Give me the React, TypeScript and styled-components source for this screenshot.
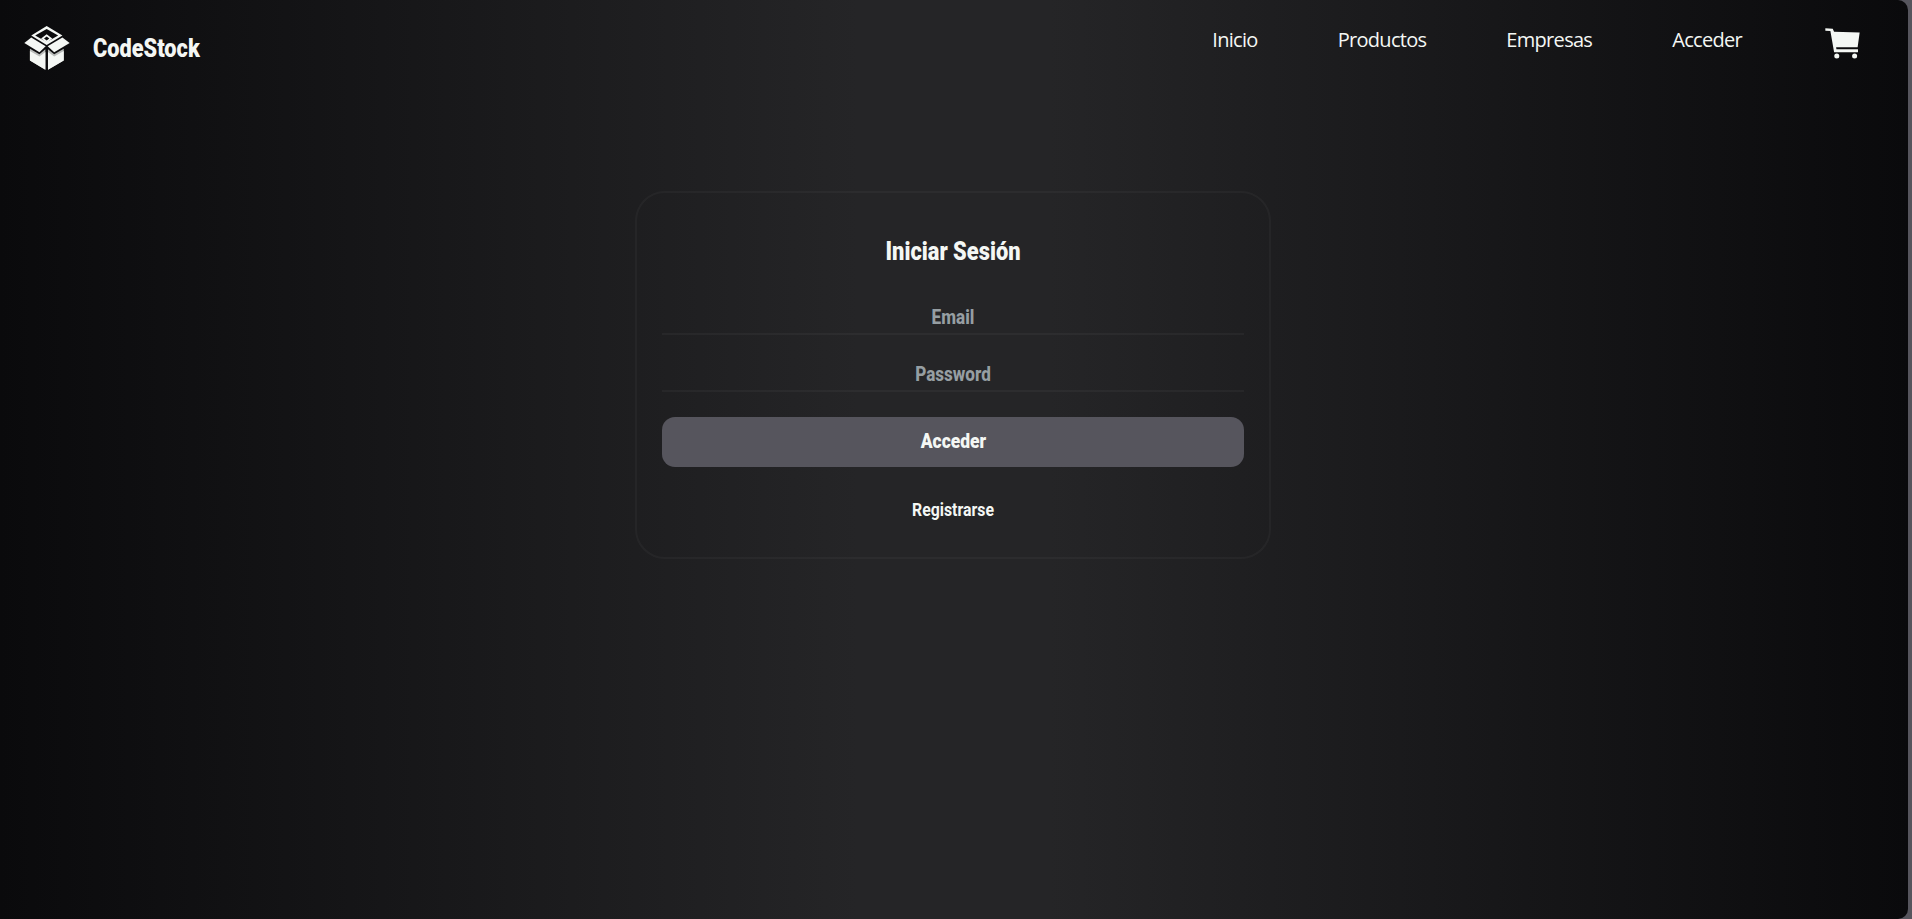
import React from "react";
import styled, { createGlobalStyle } from "styled-components";

const Global = createGlobalStyle`
  html, body { margin: 0; padding: 0; height: 100%; background: #56555d; overflow: hidden; }
  #root { height: 100%; }
  * { box-sizing: border-box; }
`;

const condensed = `"Roboto", "Liberation Sans", sans-serif`;

const Page = styled.div`
  width: 1908px;
  height: 919px;
  border-radius: 0 10px 10px 0;
  background: linear-gradient(90deg, #0a0a0c 0%, #252527 45%, #252527 55%, #0a0a0c 100%);
  display: flex;
  flex-direction: column;
  overflow: hidden;
`;
const Nav = styled.header`
  height: 96px;
  flex: none;
  display: flex;
  align-items: flex-start;
  justify-content: space-between;
  padding: 26px 48px 0 24px;
`;
const Brand = styled.a`
  display: flex;
  align-items: center;
  gap: 23px;
  color: #f4f7f4;
  font: 900 25px ${condensed};
`;
const BrandName = styled.span`
  display: inline-block;
  transform: scaleX(0.87);
  transform-origin: left center;
`;
const Links = styled.nav`
  display: flex;
  align-items: flex-start;
  gap: 80px;
  padding-top: 2px;
`;
const NavLink = styled.a`
  color: #f4f7f4;
  font: 400 20px/24px "Open Sans", "Lato", sans-serif;
  letter-spacing: -0.7px;
`;
const CartLink = styled.a`
  display: flex;
  margin-left: 3px;
`;
const Main = styled.main`
  flex: 1;
  display: flex;
  flex-direction: column;
  align-items: center;
  padding: 95px 2px 0 0;
`;
const Card = styled.form`
  width: 636px;
  height: 368px;
  padding: 0 25px;
  border: 2px solid rgba(255, 255, 255, 0.035);
  border-radius: 30px;
  display: flex;
  flex-direction: column;
`;
const Title = styled.h1`
  margin: 43px 0 0;
  text-align: center;
  color: #f4f7f4;
  font: 900 26px/30px ${condensed};
  transform: scaleX(0.84);
`;
const FieldRow = styled.div`
  height: 57px;
  padding-top: 25px;
  border-bottom: 2px solid rgba(255, 255, 255, 0.04);
`;
const Field = styled.input`
  display: block;
  width: 100%;
  height: 28px;
  padding: 0;
  background: transparent;
  border: 0;
  outline: none;
  text-align: center;
  color: #f4f7f4;
  font: 800 21px ${condensed};
  transform: scaleX(0.815);
  &::placeholder { color: #969ea2; opacity: 1; }
`;
const Fields = styled.div`
  margin-top: 12px;
`;
const Submit = styled.button`
  margin-top: 25px;
  height: 50px;
  width: 100%;
  padding: 0 0 2px;
  border: 0;
  border-radius: 13px;
  background: #56555d;
  color: #f4f7f4;
  font: 900 21px ${condensed};
`;
const SubmitLabel = styled.span`
  display: inline-block;
  transform: scaleX(0.83);
`;
const Register = styled.a`
  margin-top: 31px;
  text-align: center;
  color: #f4f7f4;
  font: 700 18px/24px ${condensed};
  transform: scaleX(0.88);
`;

const Logo = () => (
  <svg width="46" height="44" viewBox="28 33 140 134" fill="#f4f7f4">
    <path fillRule="evenodd" d="M97 33 L145 62 L97 91 L50 62 Z M97 42 L62 62 L97 82 L132 62 Z" />
    <path fillRule="evenodd" d="M97 58 L114 71 L97 84 L80 71 Z M97 65 L89 71 L97 77 L105 71 Z" />
    <path d="M50 68 L94 95 L75 113 L29 85 Z" />
    <path d="M145 68 L100 95 L120 113 L167 85 Z" />
    <path d="M46 102 L75 119 L93 104 L93 166 L46 138 Z" fill="#b9bcba" />
    <path d="M46 109 L75 126 L93 112 L93 166 L46 138 Z" />
    <path d="M149 102 L120 119 L101 104 L101 166 L149 138 Z" fill="#b9bcba" />
    <path d="M149 109 L120 126 L101 112 L101 166 L149 138 Z" />
  </svg>
);

const Cart = () => (
  <svg width="35" height="31" viewBox="39 86 104 92" fill="#f4f7f4">
    <path d="M40 87 L62 88 L66 97 L142 99 L136 143 L72 143 L73 149 L137 149 L137 158 L66 158 L55 95 L40 94 Z" />
    <circle cx="74" cy="169" r="7.5" />
    <circle cx="127" cy="169" r="7.5" />
  </svg>
);

export default function App() {
  return (
    <>
      <Global />
      <Page>
        <Nav>
          <Brand>
            <Logo />
            <BrandName>CodeStock</BrandName>
          </Brand>
          <Links>
            <NavLink>Inicio</NavLink>
            <NavLink>Productos</NavLink>
            <NavLink>Empresas</NavLink>
            <NavLink>Acceder</NavLink>
            <CartLink><Cart /></CartLink>
          </Links>
        </Nav>
        <Main>
          <Card onSubmit={(e) => e.preventDefault()}>
            <Title>Iniciar Sesión</Title>
            <Fields>
              <FieldRow><Field type="email" placeholder="Email" /></FieldRow>
              <FieldRow><Field type="password" placeholder="Password" /></FieldRow>
            </Fields>
            <Submit type="submit"><SubmitLabel>Acceder</SubmitLabel></Submit>
            <Register>Registrarse</Register>
          </Card>
        </Main>
      </Page>
    </>
  );
}
